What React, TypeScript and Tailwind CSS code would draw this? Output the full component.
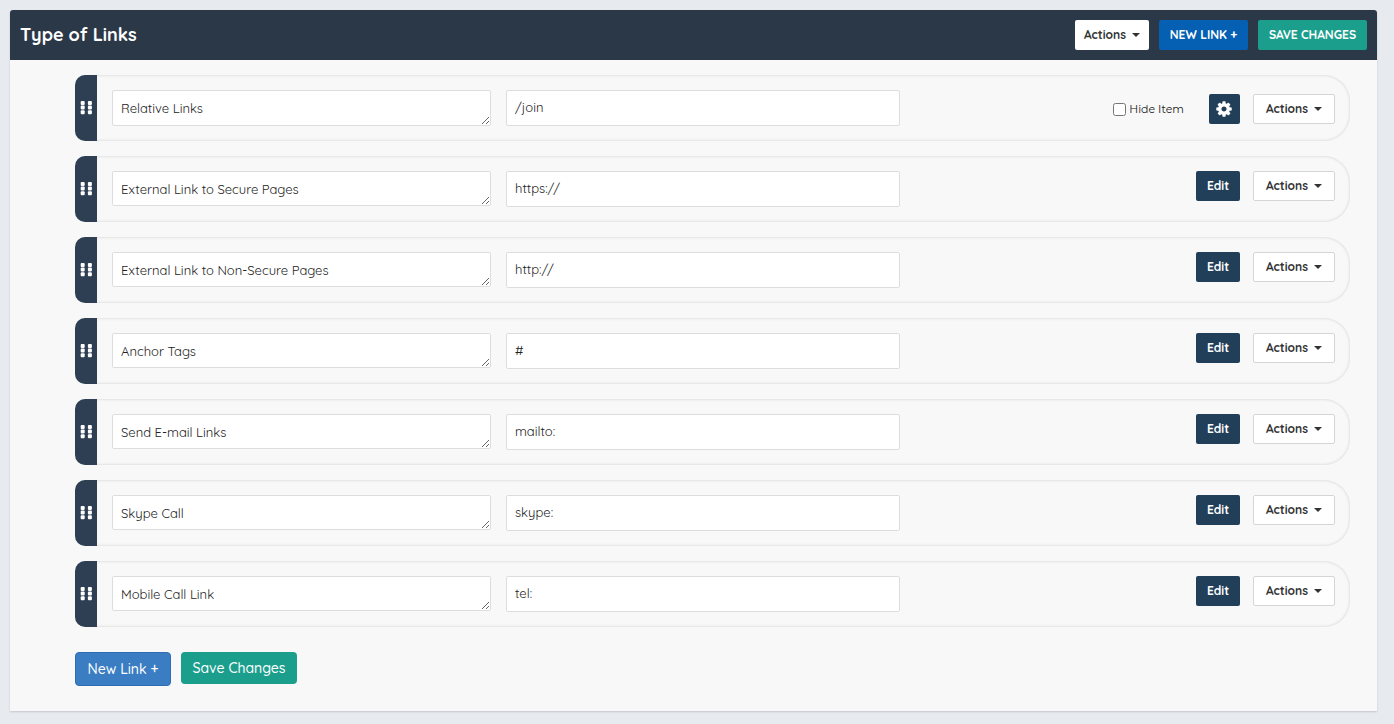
import { useState } from "react";

type LinkItem = { label: string; href: string; open?: boolean };

const LINKS: LinkItem[] = [
  { label: "Relative Links", href: "/join", open: true },
  { label: "External Link to Secure Pages", href: "https://" },
  { label: "External Link to Non-Secure Pages", href: "http://" },
  { label: "Anchor Tags", href: "#" },
  { label: "Send E-mail Links", href: "mailto:" },
  { label: "Skype Call", href: "skype:" },
  { label: "Mobile Call Link", href: "tel:" },
];

function Caret() {
  return (
    <svg viewBox="0 0 8 4" className="h-1 w-2 fill-current" aria-hidden="true">
      <path d="M0 0h8L4 4z" />
    </svg>
  );
}

function GripDots() {
  return (
    <svg viewBox="0 0 12 14" className="h-3.5 w-3 fill-white" aria-hidden="true">
      {[0.7, 7.9].map((x) =>
        [0, 4.6, 9.2].map((y) => <rect key={`${x}-${y}`} x={x} y={y} width="4" height="4" rx="1" />)
      )}
    </svg>
  );
}

function GearIcon() {
  return (
    <svg viewBox="0 0 1792 1792" className="size-[18px] fill-current" aria-hidden="true">
      <path d="M1152 896q0-106-75-181t-181-75-181 75-75 181 75 181 181 75 181-75 75-181zm512-109v222q0 12-8 23t-20 13l-185 28q-19 54-39 91 35 50 107 138 10 12 10 25t-9 23q-27 37-99 108t-94 71q-12 0-26-9l-138-108q-44 23-91 38-16 136-29 186-7 28-36 28h-222q-14 0-24.5-8.5t-11.5-21.5l-28-184q-49-16-90-37l-141 107q-10 9-25 9-14 0-25-11-126-114-165-168-7-10-7-23 0-12 8-23 15-21 51-66.5t54-70.5q-27-50-41-99l-183-27q-13-2-21-12.5t-8-23.5v-222q0-12 8-23t19-13l186-28q14-46 39-92-40-57-107-138-10-12-10-24 0-10 9-23 26-36 98.5-107.5t94.5-71.5q13 0 26 10l138 107q44-23 91-38 16-136 29-186 7-28 36-28h222q14 0 24.5 8.5t11.5 21.5l28 184q49 16 90 37l142-107q9-9 24-9 13 0 25 10 129 119 165 170 7 8 7 22 0 12-8 23-15 21-51 66.5t-54 70.5q26 50 41 98l183 28q13 2 21 12.5t8 23.5z" />
    </svg>
  );
}

function LinkRow({ item }: { item: LinkItem }) {
  const [hidden, setHidden] = useState(false);
  return (
    <li className="flex min-h-[66px] rounded-l-[10px] rounded-r-[26px] shadow-[inset_0_0_3px_#cccccc]">
      <button
        type="button"
        aria-label={`Move ${item.label}`}
        className="flex w-[22px] shrink-0 cursor-move items-center justify-center rounded-l-[10px] bg-[#2e3f54]"
      >
        <GripDots />
      </button>
      <div className="grid flex-1 grid-cols-[379fr_394fr_420fr] items-start gap-[15px] p-[15px]">
        <textarea
          aria-label="Link name"
          rows={1}
          defaultValue={item.label}
          className={
            item.open
              ? "block h-9 w-full resize rounded-xs border border-[#dddddd] bg-white px-2 py-[9px] text-[13px] leading-4 text-[#222222]"
              : "block h-[35px] w-full resize rounded-xs border border-[#dddddd] bg-white px-2 py-[9px] text-[13px] leading-4 text-[#222222]"
          }
        />
        <input
          type="text"
          aria-label="Link address"
          defaultValue={item.href}
          className="h-9 w-full rounded-xs border border-[#dddddd] bg-white px-2 pb-[2px] text-[13px] text-[#222222]"
        />
        <div className={item.open ? "flex items-center justify-end pt-1" : "flex items-center justify-end"}>
          {item.open ? (
            <>
              <label className="mr-[25px] flex items-center gap-[3px] font-[Montserrat,'DejaVu_Sans',sans-serif] text-[11px] text-[#222222]">
                <input
                  type="checkbox"
                  checked={hidden}
                  onChange={(e) => setHidden(e.target.checked)}
                  className="size-[13px]"
                />
                Hide Item
              </label>
              <button
                type="button"
                aria-label="Settings"
                className="mr-[13px] flex h-[30px] w-[31px] items-center justify-center rounded-xs bg-[#223f5a] pr-px text-white"
              >
                <GearIcon />
              </button>
            </>
          ) : (
            <button
              type="button"
              className="mr-[13px] h-[30px] w-11 rounded-xs bg-[#223f5a] text-xs font-bold text-white"
            >
              Edit
            </button>
          )}
          <button
            type="button"
            className="flex h-[30px] w-[82px] items-center justify-center gap-[6px] rounded-xs border border-[#d5d5d5] bg-white text-xs font-bold text-[#333333]"
          >
            Actions <Caret />
          </button>
        </div>
      </div>
    </li>
  );
}

export default function App() {
  return (
    <div className="min-h-screen bg-[#e7eaef] pt-[10px] pr-[17px] pb-[13px] pl-[10px] font-[Quicksand,Lato,sans-serif]">
      <main className="rounded-t-[3px] bg-[#f8f8f8] shadow-[0_1px_2px_rgba(0,0,0,0.15)]">
        <header className="flex h-[50px] items-center justify-between rounded-t-[3px] bg-[#2b3848] px-[10px]">
          <h1 className="text-lg font-bold text-white">Type of Links</h1>
          <div className="flex gap-[10px]">
            <button
              type="button"
              className="flex h-[30px] w-[74px] items-center justify-center gap-[6px] rounded-xs bg-white text-xs font-bold text-[#333333]"
            >
              Actions <Caret />
            </button>
            <button type="button" className="h-[30px] w-[89px] rounded-xs bg-[#055fb3] text-xs font-bold text-white">
              NEW LINK +
            </button>
            <button type="button" className="h-[30px] w-[109px] rounded-xs bg-[#1c9e8d] text-xs font-bold text-white">
              SAVE CHANGES
            </button>
          </div>
        </header>
        <div className="pt-[15px] pr-[27px] pb-[25px] pl-[65px]">
          <ul className="flex flex-col gap-[15px]">
            {LINKS.map((item) => (
              <LinkRow key={item.label} item={item} />
            ))}
          </ul>
          <div className="mt-[25px] flex items-start gap-[10px]">
            <button
              type="button"
              className="h-[34px] w-24 rounded-[4px] border border-[#2e6db4] bg-[#3a7dc2] text-sm font-medium text-white"
            >
              New Link +
            </button>
            <button type="button" className="h-8 w-[116px] rounded-[4px] bg-[#1c9e8d] text-sm font-medium text-white">
              Save Changes
            </button>
          </div>
        </div>
      </main>
    </div>
  );
}
